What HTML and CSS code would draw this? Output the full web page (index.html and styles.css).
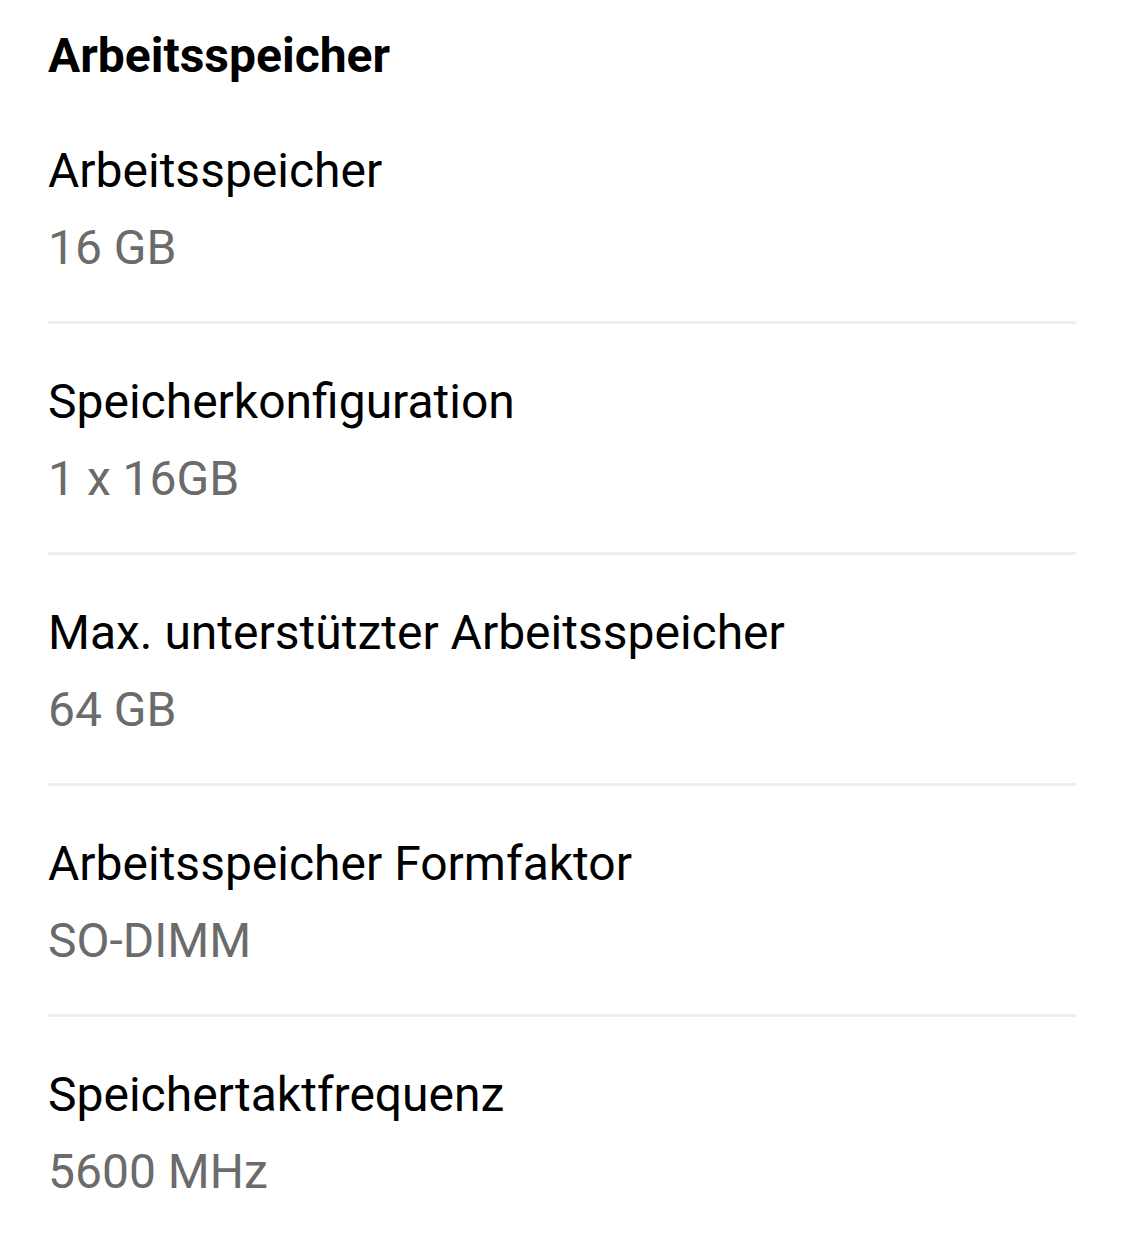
FILE: index.html
```html
<!DOCTYPE html>
<html lang="de">
<head>
<meta charset="utf-8">
<title>Arbeitsspeicher</title>
<link rel="stylesheet" href="styles.css">
</head>
<body>
<section class="specs">
  <h2 class="specs-title">Arbeitsspeicher</h2>
  <div class="spec-row">
    <div class="spec-label">Arbeitsspeicher</div>
    <div class="spec-value">16 GB</div>
  </div>
  <div class="spec-row">
    <div class="spec-label">Speicherkonfiguration</div>
    <div class="spec-value">1 x 16GB</div>
  </div>
  <div class="spec-row">
    <div class="spec-label">Max. unterstützter Arbeitsspeicher</div>
    <div class="spec-value">64 GB</div>
  </div>
  <div class="spec-row">
    <div class="spec-label">Arbeitsspeicher Formfaktor</div>
    <div class="spec-value">SO-DIMM</div>
  </div>
  <div class="spec-row">
    <div class="spec-label">Speichertaktfrequenz</div>
    <div class="spec-value">5600 MHz</div>
  </div>
</section>
</body>
</html>
```
FILE: styles.css
```css
html, body {
  margin: 0;
  padding: 0;
  background: #ffffff;
}

body {
  font-family: Roboto, "Liberation Sans", sans-serif;
  overflow: hidden;
}

.specs {
  padding: 28px 49px 0 48px;
}

.specs-title {
  margin: 0 0 9px;
  font-size: 48px;
  line-height: 56px;
  font-weight: 700;
  color: #000000;
}

.spec-row {
  padding: 50px 0 45px;
  border-bottom: 3px solid #eeeef2;
}

.spec-row:last-child {
  border-bottom: none;
}

.spec-label {
  font-size: 48px;
  line-height: 56px;
  color: #000000;
}

.spec-value {
  margin-top: 21px;
  font-size: 48px;
  line-height: 56px;
  color: #6b6b6b;
}
```
